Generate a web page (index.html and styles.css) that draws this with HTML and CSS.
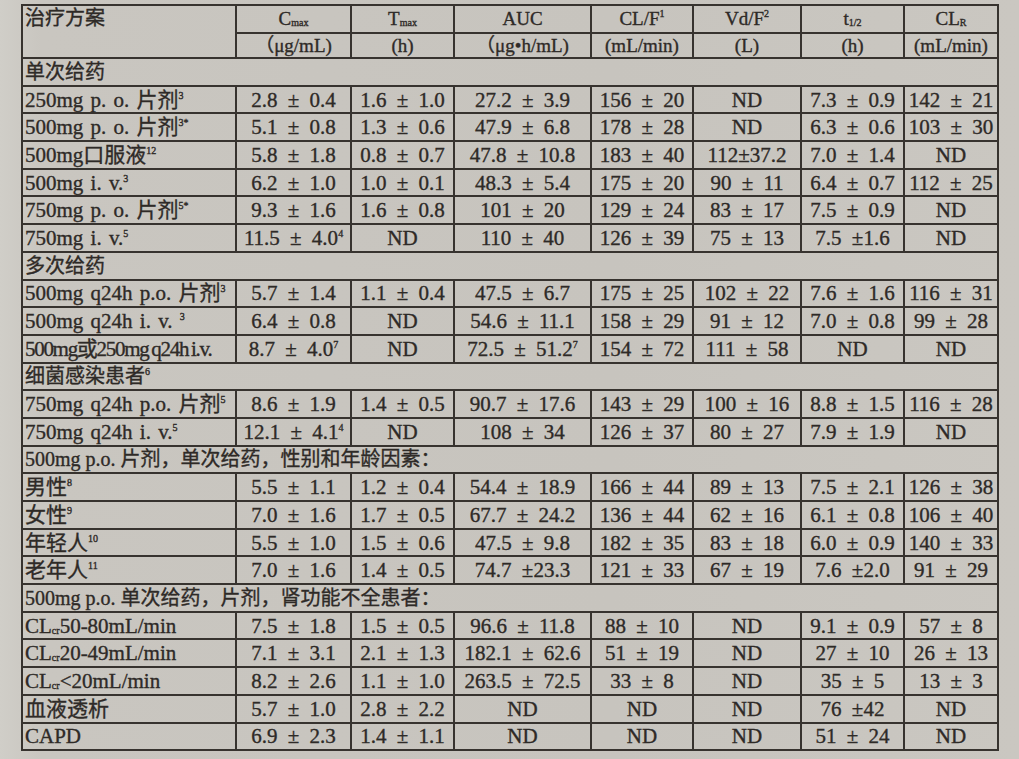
FILE: index.html
```html
<!DOCTYPE html>
<html lang="zh-CN">
<head>
<meta charset="utf-8">
<title>药代动力学参数</title>
<link rel="stylesheet" href="styles.css">
</head>
<body>
<div class="page">
<table class="pk">
<colgroup>
<col class="c-name"><col class="c-cmax"><col class="c-tmax"><col class="c-auc"><col class="c-clf"><col class="c-vd"><col class="c-t12"><col class="c-clr">
</colgroup>
<thead>
<tr class="h1">
<th class="name" rowspan="2">治疗方案</th>
<th>C<sub>max</sub></th>
<th>T<sub>max</sub></th>
<th>AUC</th>
<th>CL/F<sup>1</sup></th>
<th>Vd/F<sup>2</sup></th>
<th>t<sub>1/2</sub></th>
<th>CL<sub>R</sub></th>
</tr>
<tr class="h2">
<th>（μg/mL)</th>
<th>(h)</th>
<th>（μg•h/mL)</th>
<th>(mL/min)</th>
<th>(L)</th>
<th>(h)</th>
<th>(mL/min)</th>
</tr>
</thead>
<tbody>
<tr class="sec"><td colspan="8">单次给药</td></tr>
<tr><td class="name">250mg p. o. 片剂<sup>3</sup></td><td>2.8 ± 0.4</td><td>1.6 ± 1.0</td><td>27.2 ± 3.9</td><td>156 ± 20</td><td>ND</td><td>7.3 ± 0.9</td><td>142 ± 21</td></tr>
<tr><td class="name">500mg p. o. 片剂<sup>3*</sup></td><td>5.1 ± 0.8</td><td>1.3 ± 0.6</td><td>47.9 ± 6.8</td><td>178 ± 28</td><td>ND</td><td>6.3 ± 0.6</td><td>103 ± 30</td></tr>
<tr><td class="name">500mg口服液<sup>12</sup></td><td>5.8 ± 1.8</td><td>0.8 ± 0.7</td><td>47.8 ± 10.8</td><td>183 ± 40</td><td>112±37.2</td><td>7.0 ± 1.4</td><td>ND</td></tr>
<tr><td class="name">500mg i. v.<sup>3</sup></td><td>6.2 ± 1.0</td><td>1.0 ± 0.1</td><td>48.3 ± 5.4</td><td>175 ± 20</td><td>90 ± 11</td><td>6.4 ± 0.7</td><td>112 ± 25</td></tr>
<tr><td class="name">750mg p. o. 片剂<sup>5*</sup></td><td>9.3 ± 1.6</td><td>1.6 ± 0.8</td><td>101 ± 20</td><td>129 ± 24</td><td>83 ± 17</td><td>7.5 ± 0.9</td><td>ND</td></tr>
<tr><td class="name">750mg i. v.<sup>5</sup></td><td>11.5 ± 4.0<sup>4</sup></td><td>ND</td><td>110 ± 40</td><td>126 ± 39</td><td>75 ± 13</td><td>7.5 ±1.6</td><td>ND</td></tr>
<tr class="sec"><td colspan="8">多次给药</td></tr>
<tr><td class="name">500mg q24h p.o. 片剂<sup>3</sup></td><td>5.7 ± 1.4</td><td>1.1 ± 0.4</td><td>47.5 ± 6.7</td><td>175 ± 25</td><td>102 ± 22</td><td>7.6 ± 1.6</td><td>116 ± 31</td></tr>
<tr><td class="name">500mg q24h i. v. <sup>3</sup></td><td>6.4 ± 0.8</td><td>ND</td><td>54.6 ± 11.1</td><td>158 ± 29</td><td>91 ± 12</td><td>7.0 ± 0.8</td><td>99 ± 28</td></tr>
<tr><td class="name tight">500mg或250mg q24h i.v.</td><td>8.7 ± 4.0<sup>7</sup></td><td>ND</td><td>72.5 ± 51.2<sup>7</sup></td><td>154 ± 72</td><td>111 ± 58</td><td>ND</td><td>ND</td></tr>
<tr class="sec"><td colspan="8">细菌感染患者<sup>6</sup></td></tr>
<tr><td class="name">750mg q24h p.o. 片剂<sup>5</sup></td><td>8.6 ± 1.9</td><td>1.4 ± 0.5</td><td>90.7 ± 17.6</td><td>143 ± 29</td><td>100 ± 16</td><td>8.8 ± 1.5</td><td>116 ± 28</td></tr>
<tr><td class="name">750mg q24h i. v.<sup>5</sup></td><td>12.1 ± 4.1<sup>4</sup></td><td>ND</td><td>108 ± 34</td><td>126 ± 37</td><td>80 ± 27</td><td>7.9 ± 1.9</td><td>ND</td></tr>
<tr class="sec"><td colspan="8">500mg p.o. 片剂，单次给药，性别和年龄因素：</td></tr>
<tr><td class="name">男性<sup>8</sup></td><td>5.5 ± 1.1</td><td>1.2 ± 0.4</td><td>54.4 ± 18.9</td><td>166 ± 44</td><td>89 ± 13</td><td>7.5 ± 2.1</td><td>126 ± 38</td></tr>
<tr><td class="name">女性<sup>9</sup></td><td>7.0 ± 1.6</td><td>1.7 ± 0.5</td><td>67.7 ± 24.2</td><td>136 ± 44</td><td>62 ± 16</td><td>6.1 ± 0.8</td><td>106 ± 40</td></tr>
<tr><td class="name">年轻人<sup>10</sup></td><td>5.5 ± 1.0</td><td>1.5 ± 0.6</td><td>47.5 ± 9.8</td><td>182 ± 35</td><td>83 ± 18</td><td>6.0 ± 0.9</td><td>140 ± 33</td></tr>
<tr><td class="name">老年人<sup>11</sup></td><td>7.0 ± 1.6</td><td>1.4 ± 0.5</td><td>74.7 ±23.3</td><td>121 ± 33</td><td>67 ± 19</td><td>7.6 ±2.0</td><td>91 ± 29</td></tr>
<tr class="sec"><td colspan="8">500mg p.o. 单次给药，片剂，肾功能不全患者：</td></tr>
<tr><td class="name">CL<sub>cr</sub>50-80mL/min</td><td>7.5 ± 1.8</td><td>1.5 ± 0.5</td><td>96.6 ± 11.8</td><td>88 ± 10</td><td>ND</td><td>9.1 ± 0.9</td><td>57 ± 8</td></tr>
<tr><td class="name">CL<sub>cr</sub>20-49mL/min</td><td>7.1 ± 3.1</td><td>2.1 ± 1.3</td><td>182.1 ± 62.6</td><td>51 ± 19</td><td>ND</td><td>27 ± 10</td><td>26 ± 13</td></tr>
<tr><td class="name">CL<sub>cr</sub>&lt;20mL/min</td><td>8.2 ± 2.6</td><td>1.1 ± 1.0</td><td>263.5 ± 72.5</td><td>33 ± 8</td><td>ND</td><td>35 ± 5</td><td>13 ± 3</td></tr>
<tr><td class="name">血液透析</td><td>5.7 ± 1.0</td><td>2.8 ± 2.2</td><td>ND</td><td>ND</td><td>ND</td><td>76 ±42</td><td>ND</td></tr>
<tr><td class="name">CAPD</td><td>6.9 ± 2.3</td><td>1.4 ± 1.1</td><td>ND</td><td>ND</td><td>ND</td><td>51 ± 24</td><td>ND</td></tr>
</tbody>
</table>
</div>
</body>
</html>
```
FILE: styles.css
```css
html, body {
  margin: 0;
  padding: 0;
}
body {
  width: 1019px;
  height: 759px;
  overflow: hidden;
  background: linear-gradient(90deg, #d0cec8 0%, #c9c6c0 4%, #c7c4be 60%, #cac7c1 100%);
  font-family: "Liberation Serif", "Noto Sans CJK SC", serif;
  color: #2e2a27;
}
.page {
  padding: 4px 0 0 21px;
}
.pk {
  border-collapse: collapse;
  table-layout: fixed;
  width: 976px;
  font-size: 21px;
  word-spacing: 5px;
  -webkit-text-stroke: 0.35px #2e2a27;
}
.c-name { width: 214px; }
.c-cmax { width: 115px; }
.c-tmax { width: 103px; }
.c-auc { width: 137px; }
.c-clf { width: 102px; }
.c-vd { width: 108px; }
.c-t12 { width: 103px; }
.c-clr { width: 94px; }

.pk th, .pk td {
  border: 2px solid #37332f;
  padding: 0 2px;
  text-align: center;
  white-space: nowrap;
  overflow: hidden;
  font-weight: normal;
  line-height: 22px;
}
.pk .h1 th {
  height: 26px;
  font-size: 19px;
  vertical-align: middle;
}
.pk .h2 th {
  height: 23px;
  font-size: 19px;
  word-spacing: 0;
}
.pk th.name {
  text-align: left;
  vertical-align: top;
  font-size: 20px;
  padding-top: 1px;
}
.pk tbody td {
  height: 25.7px;
}
.pk td.name {
  text-align: left;
  padding-left: 2px;
  word-spacing: 2px;
}
.pk td.tight {
  letter-spacing: -1.3px;
  word-spacing: -1px;
}
.pk .sec td {
  text-align: left;
  padding-left: 2px;
  word-spacing: 0;
  font-size: 20px;
}
.pk sup {
  font-size: 10px;
  line-height: 0;
  vertical-align: 8px;
  word-spacing: 0;
}
.pk sub {
  font-size: 10px;
  line-height: 0;
  vertical-align: -1px;
  word-spacing: 0;
}
```
